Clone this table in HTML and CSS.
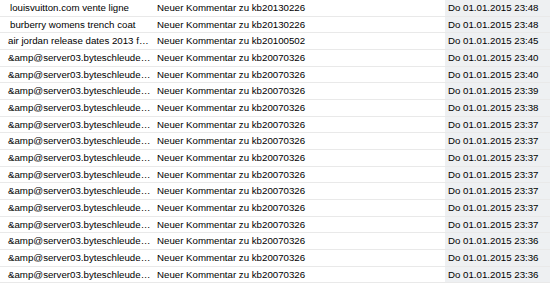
FILE: index.html
```html
<!DOCTYPE html>
<html>
<head>
<meta charset="utf-8">
<link rel="stylesheet" href="styles.css">
</head>
<body>
<div class="list">
  <div class="row"><div class="c1 indent">louisvuitton.com vente ligne</div><div class="c2">Neuer Kommentar zu kb20130226</div><div class="c3">Do 01.01.2015 23:48</div></div>
  <div class="row"><div class="c1 indent">burberry womens trench coat</div><div class="c2">Neuer Kommentar zu kb20130226</div><div class="c3">Do 01.01.2015 23:48</div></div>
  <div class="row"><div class="c1">air jordan release dates 2013 for sale</div><div class="c2">Neuer Kommentar zu kb20100502</div><div class="c3">Do 01.01.2015 23:45</div></div>
  <div class="row"><div class="c1">&amp;amp@server03.byteschleuder.de</div><div class="c2">Neuer Kommentar zu kb20070326</div><div class="c3">Do 01.01.2015 23:40</div></div>
  <div class="row"><div class="c1">&amp;amp@server03.byteschleuder.de</div><div class="c2">Neuer Kommentar zu kb20070326</div><div class="c3">Do 01.01.2015 23:40</div></div>
  <div class="row"><div class="c1">&amp;amp@server03.byteschleuder.de</div><div class="c2">Neuer Kommentar zu kb20070326</div><div class="c3">Do 01.01.2015 23:39</div></div>
  <div class="row"><div class="c1">&amp;amp@server03.byteschleuder.de</div><div class="c2">Neuer Kommentar zu kb20070326</div><div class="c3">Do 01.01.2015 23:38</div></div>
  <div class="row"><div class="c1">&amp;amp@server03.byteschleuder.de</div><div class="c2">Neuer Kommentar zu kb20070326</div><div class="c3">Do 01.01.2015 23:37</div></div>
  <div class="row"><div class="c1">&amp;amp@server03.byteschleuder.de</div><div class="c2">Neuer Kommentar zu kb20070326</div><div class="c3">Do 01.01.2015 23:37</div></div>
  <div class="row"><div class="c1">&amp;amp@server03.byteschleuder.de</div><div class="c2">Neuer Kommentar zu kb20070326</div><div class="c3">Do 01.01.2015 23:37</div></div>
  <div class="row"><div class="c1">&amp;amp@server03.byteschleuder.de</div><div class="c2">Neuer Kommentar zu kb20070326</div><div class="c3">Do 01.01.2015 23:37</div></div>
  <div class="row"><div class="c1">&amp;amp@server03.byteschleuder.de</div><div class="c2">Neuer Kommentar zu kb20070326</div><div class="c3">Do 01.01.2015 23:37</div></div>
  <div class="row"><div class="c1">&amp;amp@server03.byteschleuder.de</div><div class="c2">Neuer Kommentar zu kb20070326</div><div class="c3">Do 01.01.2015 23:37</div></div>
  <div class="row"><div class="c1">&amp;amp@server03.byteschleuder.de</div><div class="c2">Neuer Kommentar zu kb20070326</div><div class="c3">Do 01.01.2015 23:37</div></div>
  <div class="row"><div class="c1">&amp;amp@server03.byteschleuder.de</div><div class="c2">Neuer Kommentar zu kb20070326</div><div class="c3">Do 01.01.2015 23:36</div></div>
  <div class="row"><div class="c1">&amp;amp@server03.byteschleuder.de</div><div class="c2">Neuer Kommentar zu kb20070326</div><div class="c3">Do 01.01.2015 23:36</div></div>
  <div class="row"><div class="c1">&amp;amp@server03.byteschleuder.de</div><div class="c2">Neuer Kommentar zu kb20070326</div><div class="c3">Do 01.01.2015 23:36</div></div>
</div>
</body>
</html>
```

FILE: styles.css
```css
html, body {
  margin: 0;
  padding: 0;
  background: #ffffff;
}
.list {
  width: 550px;
  font-family: "Liberation Sans", Arial, sans-serif;
  font-size: 9.7px;
  color: #000000;
}
.row {
  display: grid;
  grid-template-columns: 155px 290px 105px;
  height: 16.667px;
  box-sizing: border-box;
  border-bottom: 1px solid #e9e9e9;
  line-height: 15.667px;
}
.c1 {
  padding-left: 8px;
  padding-right: 4px;
  white-space: nowrap;
  overflow: hidden;
  text-overflow: ellipsis;
}
.c1.indent {
  padding-left: 10px;
}
.c2 {
  padding-left: 2px;
  white-space: nowrap;
  overflow: hidden;
}
.c3 {
  padding-left: 3px;
  white-space: nowrap;
  background: #eef0f2;
}
```
